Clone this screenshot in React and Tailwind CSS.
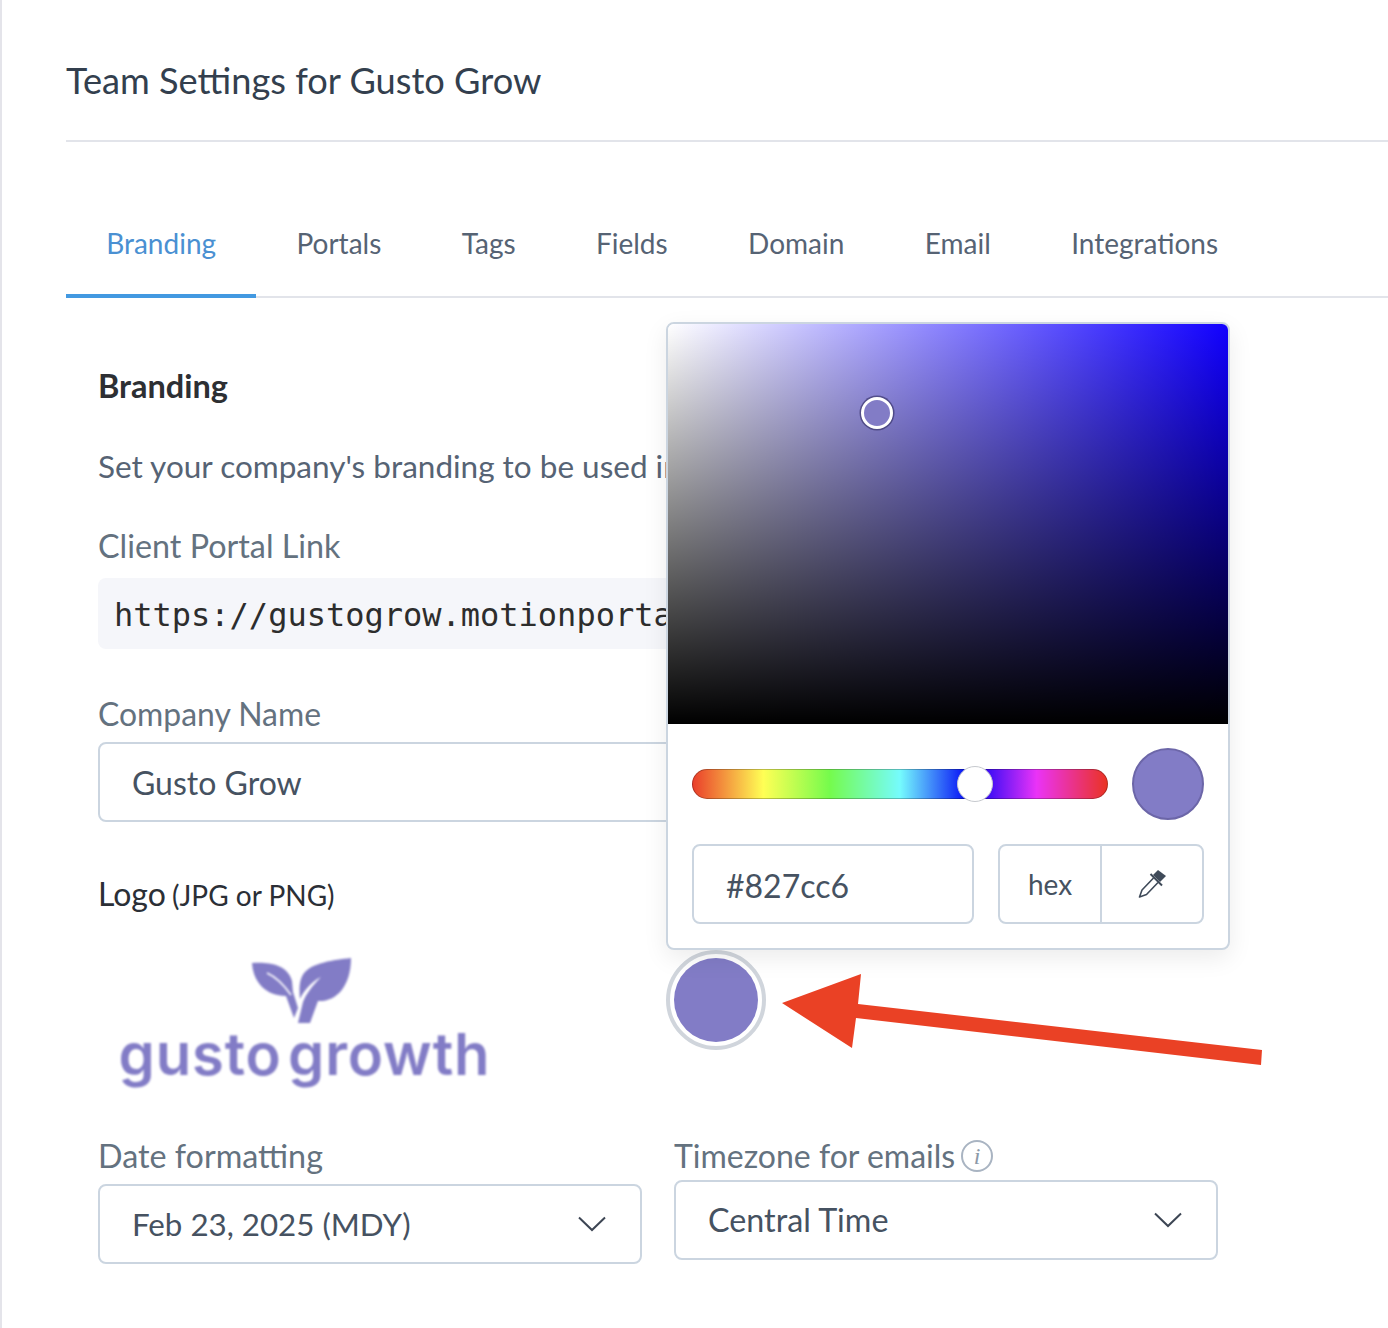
import React from "react";

const Tab = ({ children, active }) => (
  <div className={active
    ? "px-[40.2px] h-[102px] pt-[27px] leading-[40px] border-b-4 border-[#4299e1] text-[#4a90d2]"
    : "px-[40.2px] h-[102px] pt-[27px] leading-[40px] text-[#566374]"}>
    {children}
  </div>
);

const Chevron = () => (
  <svg width="30" height="16" viewBox="0 0 30 16" fill="none" stroke="#3d4654" strokeWidth="2">
    <polyline points="2,1.5 15,14 28,1.5" />
  </svg>
);

const Select = ({ value, className }) => (
  <div className={"h-20 rounded-lg border-2 border-[#cbd5e0] flex items-center justify-between pl-[32px] pr-[33px] text-[#465261] " + className}>
    <span>{value}</span>
    <Chevron />
  </div>
);

const Logo = () => (
  <div className="ml-[22px] mt-[43px] w-[400px] h-[140px] flex flex-col items-center blur-[0.8px]">
    <svg width="102" height="66" viewBox="0 0 102 66" className="ml-[-36px] shrink-0" fill="#827cc6">
      <path d="M1 5 C15 4 36 5 41 23 L42 34 L47 50 L43 60 L35 38 C15 38 2 24 1 5 Z" />
      <path d="M100 0 C82 2 62 5 54 14 C48 20 48 32 49 41 C52 34 60 24 70 19 C62 27 55 36 52 44 L47 65 L59 65 L67 43 C84 44 100 30 100 0 Z" />
      <path d="M16 15 C25 19 33 27 40 37" fill="none" stroke="#fff" strokeWidth="1.6" />
    </svg>
    <div className="font-['Inter',sans-serif] font-semibold text-[#827cc6] text-[58px] leading-[60px] tracking-[0.85px] whitespace-nowrap ml-[-31px] mt-0 [word-spacing:-9px]">gusto growth</div>
  </div>
);

const Dropper = () => (
  <svg width="30" height="30" viewBox="0 0 30 30" fill="none" className="ml-0.5">
    <polygon points="20,1 28,7 22,13 15,6" fill="#3f4a59" />
    <line x1="12.5" y1="5" x2="24" y2="16.5" stroke="#3f4a59" strokeWidth="2" />
    <path d="M15.5 9 L4 21 L1.5 28 L8.5 25.5 L20 13.5" stroke="#3f4a59" strokeWidth="1.6" strokeLinejoin="round" />
  </svg>
);

const Popover = () => (
  <div className="absolute left-[600px] top-[322px] w-[564px] h-[628px] bg-white rounded-lg border-2 border-[#cbd5e0] shadow-[0_8px_24px_rgba(0,0,0,0.08)] overflow-hidden">
    <div className="h-[400px] bg-[linear-gradient(to_right,#fff,#1100ff)]">
      <div className="relative h-full bg-[linear-gradient(to_top,#000,transparent)]">
        <div className="absolute left-[193px] top-[73px] w-8 h-8 rounded-full border-[3.5px] border-white bg-[#827cc6] shadow-[0_0_0_1.5px_rgba(60,55,110,0.7)]" />
      </div>
    </div>
    <div className="px-6 pt-6">
      <div className="flex items-center justify-between">
        <div className="relative w-[416px] h-[30px] rounded-[15px] border border-black/25 bg-[linear-gradient(to_right,#ea3f2b_0%,#ffff55_17%,#75fb4c_33%,#75fbfd_50%,#0000f5_67%,#ea33f7_83%,#ea3323_100%)]">
          <div className="absolute left-[264px] top-[-4px] w-9 h-9 rounded-full bg-white border-[1.5px] border-[#c6c9ce]" />
        </div>
        <div className="w-[72px] h-[72px] rounded-full bg-[#827cc6] border-2 border-[#6c66a8]" />
      </div>
      <div className="flex justify-between mt-6">
        <div className="w-[282px] h-20 rounded-lg border-2 border-[#cbd5e0] flex items-center pl-[32px] pt-1 text-[32px] text-[#465261]">#827cc6</div>
        <div className="w-[206px] h-20 rounded-lg border-2 border-[#cbd5e0] flex items-center text-[#465261]">
          <div className="w-[102px] h-full flex items-center justify-center text-[28px] border-r-2 border-[#cbd5e0]">hex</div>
          <div className="flex-1 flex items-center justify-center"><Dropper /></div>
        </div>
      </div>
    </div>
  </div>
);

export default function App() {
  return (
    <div className="relative w-[1388px] h-[1328px] overflow-hidden bg-white border-l-2 border-[#e4e4ea] font-[Lato,sans-serif]">
      <div className="pl-16">
        <h1 className="h-[140px] flex items-center text-[36.2px] text-[#333f4e] border-b-2 border-[#e2e4ea] box-content leading-none">
          <span className="mt-[21px]">Team Settings for Gusto Grow</span>
        </h1>
        <div className="mt-[54px] h-[102px] flex text-[28px] border-b-2 border-[#e2e4ea]">
          <Tab active>Branding</Tab>
          <Tab>Portals</Tab>
          <Tab>Tags</Tab>
          <Tab>Fields</Tab>
          <Tab>Domain</Tab>
          <Tab>Email</Tab>
          <Tab>Integrations</Tab>
        </div>

        <div className="relative pl-8 w-[1152px] -mt-[298px] pt-[298px]">
          <Popover />
          <h2 className="mt-[68px] text-[32.5px] leading-10 font-bold text-[#2d2f33]">Branding</h2>
          <p className="mt-10 text-[31.5px] leading-10 text-[#566374] whitespace-nowrap">Set your company's branding to be used in your client portal</p>
          <div className="mt-10 text-[32.3px] leading-10 text-[#64727f]">Client Portal Link</div>
          <div className="mt-[12px] h-[71px] rounded-lg bg-[#f5f6fa] flex items-center pl-4 pt-0.5 font-['DejaVu_Sans_Mono',monospace] text-[32px] text-[#2d2d2d] whitespace-nowrap overflow-hidden">https://gustogrow.motionportal.io</div>
          <div className="mt-[45px] text-[31.9px] leading-10 text-[#64727f]">Company Name</div>
          <div className="mt-[8px] h-20 rounded-lg border-2 border-[#cbd5e0] flex items-center pl-[32px] pt-0.5 text-[32px] text-[#465261]">Gusto Grow</div>
          <div className="mt-[52px] leading-10 text-[#2b2f36] text-[32px]">Logo <span className="text-[28px] ml-[-2px]">(JPG or PNG)</span></div>
          <div className="flex h-[223px]">
            <div className="w-[568px]"><Logo /></div>
            <div className="mt-[35px] w-[100px] h-[100px] rounded-full border-4 border-[#d0d5dc] p-1">
              <div className="w-full h-full rounded-full bg-[#827cc6]" />
            </div>
          </div>
          <div className="grid grid-cols-2 gap-8 w-[1120px] mt-[-2px]">
            <div>
              <div className="text-[32.3px] leading-10 text-[#64727f]">Date formatting</div>
              <Select value="Feb 23, 2025 (MDY)" className="mt-2 text-[31.3px]" />
            </div>
            <div>
              <div className="text-[32px] leading-10 text-[#64727f] flex items-center gap-[6px]">
                Timezone for emails
                <span className="w-8 h-8 rounded-full border-2 border-[#a9b4c2] flex items-center justify-center font-['Liberation_Serif',serif] italic text-[24px] leading-none text-[#8c99a8]">i</span>
              </div>
              <Select value="Central Time" className="mt-1 text-[32.3px]" />
            </div>
          </div>
        </div>
      </div>
      <svg className="absolute left-[776px] top-[970px] pointer-events-none" width="490" height="100" viewBox="0 0 490 100">
        <polygon points="4,33 83,4 80,34 484,80 483,95 78,48 74,78" fill="#ea4125" />
      </svg>
    </div>
  );
}
